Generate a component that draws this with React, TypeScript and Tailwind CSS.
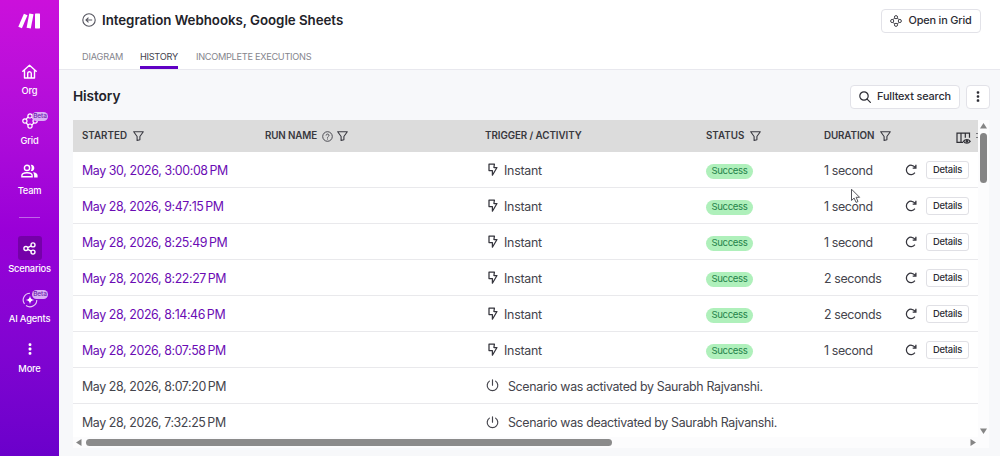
import React from "react";

type IconProps = { className?: string };

const Funnel = ({ className = "" }: IconProps) => (
  <svg className={`h-[11px] w-[11px] shrink-0 ${className}`} viewBox="0 0 11 11" fill="none" stroke="#3a3a42" strokeWidth="1.1" strokeLinejoin="round">
    <path d="M.7 .8h9.6L6.9 5.5v3.2L4.1 9.5V5.5L.7 .8Z" />
  </svg>
);

const GridIcon = ({ className = "" }: IconProps) => (
  <svg className={className} viewBox="0 0 16 16" fill="none" stroke="currentColor" strokeWidth="1.2">
    <circle cx="8" cy="2.9" r="2.1" />
    <circle cx="8" cy="13.1" r="2.1" />
    <circle cx="2.9" cy="8" r="2.1" />
    <circle cx="13.1" cy="8" r="2.1" />
    <path d="M6.2 4 4.1 6.2M9.8 4l2.1 2.2M6.2 12 4.1 9.8M9.8 12l2.1-2.2" />
  </svg>
);

const Dots = ({ className = "" }: IconProps) => (
  <svg className={className} viewBox="0 0 4 12" fill="currentColor">
    <rect x=".6" y=".2" width="2.8" height="2.8" rx="1" />
    <rect x=".6" y="4.6" width="2.8" height="2.8" rx="1" />
    <rect x=".6" y="9" width="2.8" height="2.8" rx="1" />
  </svg>
);

const Bolt = () => (
  <svg className="h-[13px] w-[11px] shrink-0" viewBox="0 0 11 13" fill="none" stroke="#34343c" strokeWidth="1.25" strokeLinejoin="round">
    <path d="M2 1.100h5.400L6.900 4.500h3.100L5.400 12.200V7.500H2V1.100Z" />
  </svg>
);

const Power = () => (
  <svg className="h-[13px] w-[13px] shrink-0" viewBox="0 0 13 13" fill="none" stroke="#44444c" strokeWidth="1.15" strokeLinecap="round">
    <path d="M6.5.8v5.4M3.4 2.1a5.3 5.3 0 1 0 6.2 0" />
  </svg>
);

const Refresh = () => (
  <svg className="h-[12px] w-[12px] shrink-0" viewBox="0 0 12 12" fill="none" stroke="#34343c" strokeWidth="1.25">
    <path d="M9.900 3.200A4.700 4.700 0 1 0 9.900 8.700" />
    <path d="M10.900.8v3.200H7.700" />
    <path d="M8.600 3.700 10.900 1.400v2.300Z" fill="#34343c" stroke="none" />
  </svg>
);

const Beta = () => (
  <span className="absolute top-0 left-[32px] flex h-[9px] w-[16px] items-center justify-center rounded-full bg-[#d9aff5] text-[6.500px] font-medium tracking-[-0.1px] text-[#6d1cae]">
    Beta
  </span>
);

function NavItem({ label, beta, children }: { label: string; beta?: boolean; children: React.ReactNode }) {
  return (
    <a className="relative flex h-[50px] w-full flex-col items-center">
      <span className="flex h-[18px] items-center justify-center">{children}</span>
      {beta && <Beta />}
      <span className="mt-[4px] text-[9.300px] leading-[14px] font-medium tracking-[-0.180px] whitespace-nowrap">{label}</span>
    </a>
  );
}

function Sidebar() {
  return (
    <nav className="flex h-full w-[59px] shrink-0 flex-col items-center bg-linear-to-b from-[#cb10db] via-[#9a00d8] to-[#6b00cb] text-white">
      <svg className="mt-[13px] h-[16px] w-[23px] shrink-0" viewBox="0 0 23 16" fill="#fff">
        <path d="M5.900.7 9.500 2.300 3.900 15.300.3 13.700Z" />
        <path d="M11.300.5l4.200.8L12.800 15.500l-4.200-.8Z" />
        <rect x="17" y=".6" width="5" height="14.800" rx=".6" />
      </svg>
      <div className="mt-[33px] w-full">
        <NavItem label="Org">
          <svg className="h-[15px] w-[15px]" viewBox="0 0 15 15" fill="none" stroke="currentColor" strokeWidth="1.400" strokeLinejoin="round" strokeLinecap="round">
            <path d="M.8 7.200 7.500 1.200l6.700 6M2.500 6v8h10V6M5.700 13.800V9.600a1.800 1.800 0 0 1 3.600 0v4.200" />
          </svg>
        </NavItem>
        <NavItem label="Grid" beta>
          <GridIcon className="h-[16px] w-[16px]" />
        </NavItem>
        <NavItem label="Team">
          <svg className="h-[14px] w-[17px]" viewBox="0 0 17 14">
            <circle cx="6" cy="3.900" r="2.600" fill="none" stroke="currentColor" strokeWidth="1.400" />
            <path d="M.9 12.700v-1.200c0-2 2.200-2.800 5.100-2.800s5.100.8 5.100 2.800v1.200Z" fill="none" stroke="currentColor" strokeWidth="1.400" />
            <path d="M9.700.8c2.200-.3 3.600 1.200 3.600 3.100S11.900 7.300 9.700 7c1.300-1.700 1.300-4.500 0-6.200ZM12 8.200c2.800.3 4.600 1.200 4.600 3.300v1.900h-3.500v-1.900c0-1.400-.3-2.300-1.100-3.300Z" fill="currentColor" />
          </svg>
        </NavItem>
      </div>
      <div className="mt-[5px] h-px w-[21px] shrink-0 bg-[#c065e8]" />
      <div className="mt-[18px] w-full">
        <a className="flex h-[54px] w-full flex-col items-center">
          <span className="flex h-[24px] w-[24px] items-center justify-center rounded-[3px] bg-[#7500a9]">
            <svg className="h-[13px] w-[13px]" viewBox="0 0 13 13" fill="none" stroke="currentColor" strokeWidth="1.350">
              <circle cx="2.900" cy="6.500" r="2" />
              <circle cx="10" cy="2.900" r="2" />
              <circle cx="10" cy="10.100" r="2" />
              <path d="m4.700 5.600 3.500-1.800M4.700 7.400l3.500 1.800" />
            </svg>
          </span>
          <span className="mt-[2px] text-[9.300px] leading-[14px] font-medium tracking-[-0.200px]">Scenarios</span>
        </a>
        <NavItem label="AI Agents" beta>
          <svg className="mt-px h-[16px] w-[16px]" viewBox="0 0 16 16" fill="none" stroke="currentColor" strokeWidth="1.100">
            <path d="M8 3.700c.4 2.700 1.500 3.900 4.200 4.300-2.700.4-3.800 1.600-4.200 4.300-.4-2.700-1.500-3.900-4.200-4.300C6.500 7.600 7.600 6.400 8 3.700Z" fill="currentColor" stroke="none" />
            <path d="M8 1.200a6.800 6.800 0 0 0-5.500 10.800M4 13.500A6.800 6.800 0 0 0 14.800 8" opacity=".8" />
          </svg>
        </NavItem>
        <NavItem label="More">
          <Dots className="h-[12px] w-[4px]" />
        </NavItem>
      </div>
    </nav>
  );
}

function Header() {
  return (
    <header className="flex h-[70px] shrink-0 flex-col border-b border-[#e8e8ee] bg-white pr-[19px] pl-[23px]">
      <div className="flex h-[41px] items-center">
        <svg className="-mt-px h-[14px] w-[14px] shrink-0" viewBox="0 0 14 14" fill="none" stroke="#55555f" strokeWidth="1.100">
          <circle cx="7" cy="7" r="6.200" />
          <path d="M10.200 7H4.200M6.500 4.600 4 7l2.500 2.400" />
        </svg>
        <h1 className="ml-[6px] text-[13.300px] font-semibold tracking-[-0.030px] text-[#222229]">Integration Webhooks, Google Sheets</h1>
        <button className="ml-auto flex h-[24px] w-[100px] items-center justify-center gap-[6px] rounded-[4px] border border-[#e2e2e8] bg-white text-[10.900px] font-medium tracking-[-0.170px] text-[#2c2c34]">
          <GridIcon className="h-[12px] w-[12px]" />
          Open in Grid
        </button>
      </div>
      <div className="flex h-[28px] text-[9.200px] tracking-[-0.280px] text-[#85858d]">
        <a className="flex h-[28px] w-[58px] items-center pt-[3px] whitespace-nowrap tracking-[-0.200px]">DIAGRAM</a>
        <a className="flex h-[28px] w-[38px] items-center border-b-[3px] border-[#6000c4] pt-[6px] whitespace-nowrap text-[#44444e]">HISTORY</a>
        <a className="ml-[18px] flex h-[28px] items-center pt-[3px] whitespace-nowrap">INCOMPLETE EXECUTIONS</a>
      </div>
    </header>
  );
}

type Run = { started: string; activity?: string; duration?: string };

const runs: Run[] = [
  { started: "May 30, 2026, 3:00:08\u202fPM", duration: "1 second" },
  { started: "May 28, 2026, 9:47:15\u202fPM", duration: "1 second" },
  { started: "May 28, 2026, 8:25:49\u202fPM", duration: "1 second" },
  { started: "May 28, 2026, 8:22:27\u202fPM", duration: "2 seconds" },
  { started: "May 28, 2026, 8:14:46\u202fPM", duration: "2 seconds" },
  { started: "May 28, 2026, 8:07:58\u202fPM", duration: "1 second" },
  { started: "May 28, 2026, 8:07:20\u202fPM", activity: "Scenario was activated by Saurabh Rajvanshi." },
  { started: "May 28, 2026, 7:32:25\u202fPM", activity: "Scenario was deactivated by Saurabh Rajvanshi." },
];

function Row({ run }: { run: Run }) {
  return (
    <div className="flex h-[36px] shrink-0 items-center border-b border-[#e9e9ec] pl-[9px] text-[12.400px] tracking-[-0.330px] whitespace-nowrap text-[#44444c] last:border-b-0">
      <div className={run.activity ? "w-[404px] pt-[3px] tracking-[-0.390px]" : "w-[404px] pt-[3px] tracking-[-0.390px] text-[#6b0cb4]"}>{run.started}</div>
      {run.activity ? (
        <div className="flex items-center gap-[9px] pt-px">
          <Power />
          <span className="pt-[2px]">{run.activity}</span>
        </div>
      ) : (
        <>
          <div className="flex w-[220px] items-center gap-[6px] pl-[1px] tracking-[-0.250px]">
            <Bolt />
            <span className="pt-[3px]">Instant</span>
          </div>
          <div className="w-[118px] pt-[3px]">
            <span className="flex h-[15px] w-[47px] items-center justify-center rounded-full bg-[#aff0bb] text-[9.600px] tracking-[-0.350px] text-[#25824a]">Success</span>
          </div>
          <div className="w-[81px] pt-[3px] tracking-[-0.370px]">{run.duration}</div>
          <Refresh />
          <button className="ml-[9px] flex h-[18px] w-[43px] items-center justify-center rounded-[3px] border border-[#e0e0e5] bg-white pt-px text-[9.400px] font-medium tracking-[-0.200px] text-[#2c2c34]">
            Details
          </button>
        </>
      )}
    </div>
  );
}

function HistoryTable() {
  return (
    <div className="flex h-[328px] w-[916px] flex-col bg-[#fcfcfd]">
      <div className="flex h-[317px]">
        <div className="flex w-[905px] flex-col overflow-hidden bg-white">
          <div className="flex h-[32px] shrink-0 items-center bg-[#dcdcdc] pl-[9px] text-[9.800px] font-semibold whitespace-nowrap text-[#38383e]">
            <div className="flex w-[183px] shrink-0 items-center gap-[6px]">
              STARTED <Funnel />
            </div>
            <div className="flex w-[220px] shrink-0 items-center tracking-[-0.130px]">
              RUN NAME
              <svg className="ml-[5px] h-[11px] w-[11px]" viewBox="0 0 11 11" fill="none" stroke="#44444c" strokeWidth=".95">
                <circle cx="5.500" cy="5.500" r="4.800" />
                <path d="M4.100 4.500c0-1.900 2.900-1.800 2.900-.1 0 1.100-1.500 1.100-1.500 2.300M5.500 7.500v1" />
              </svg>
              <Funnel className="ml-[4px]" />
            </div>
            <div className="w-[221px] shrink-0 tracking-[-0.060px]">TRIGGER / ACTIVITY</div>
            <div className="flex w-[118px] shrink-0 items-center gap-[6px]">
              STATUS <Funnel />
            </div>
            <div className="flex w-[132px] shrink-0 items-center gap-[6px] tracking-[-0.100px]">
              DURATION <Funnel />
            </div>
            <svg className="mt-[5px] h-[13px] w-[15px] shrink-0" viewBox="0 0 15 13" fill="none" stroke="#2e2e34" strokeWidth="1.200">
              <path d="M7 10.300H1V1.100h12.500v4.700M5 1.100v9.200M9.300 1.100v4.700" />
              <path d="M7.500 9.300c1.600-2.400 5.100-2.400 6.700 0-1.600 2.400-5.100 2.400-6.700 0Z" />
              <circle cx="10.900" cy="9.300" r=".8" fill="#2e2e34" />
            </svg>
            <div className="ml-[5px] flex shrink-0 flex-col gap-[3px] pb-[2px]">
              <i className="h-px w-[2px] bg-[#77777c]" />
              <i className="h-px w-[2px] bg-[#77777c]" />
            </div>
          </div>
          {runs.map((run) => (
            <Row key={run.started} run={run} />
          ))}
        </div>
        <div className="flex w-[11px] flex-col items-center">
          <svg className="mt-[3px] h-[6px] w-[7px]" viewBox="0 0 7 6" fill="#858585">
            <path d="M3.500 0 7 5.500H0Z" />
          </svg>
          <div className="mt-[4px] h-[50px] w-[7px] rounded-full bg-[#858585]" />
          <svg className="mt-auto mb-[3px] h-[6px] w-[7px]" viewBox="0 0 7 6" fill="#858585">
            <path d="M3.500 6 7 .5H0Z" />
          </svg>
        </div>
      </div>
      <div className="flex h-[11px] w-[905px] items-center pb-px pl-[3px]">
        <svg className="h-[7px] w-[6px]" viewBox="0 0 6 7" fill="#858585">
          <path d="M0 3.500 5.500 0v7Z" />
        </svg>
        <div className="ml-[4px] h-[7px] w-[526px] rounded-full bg-[#8b8b8b]" />
        <svg className="mr-[2px] ml-auto h-[7px] w-[6px]" viewBox="0 0 6 7" fill="#858585">
          <path d="M6 3.500.5 0v7Z" />
        </svg>
      </div>
    </div>
  );
}

export default function App() {
  return (
    <div className="relative flex h-[456px] w-[1000px] overflow-hidden bg-[#f7f8fa] font-[Inter,sans-serif]">
      <Sidebar />
      <div className="flex min-w-0 flex-1 flex-col">
        <Header />
        <main className="flex flex-1 flex-col pr-[10px] pl-[14px]">
          <div className="flex h-[50px] shrink-0 items-center pt-[3px]">
            <h2 className="text-[13.700px] font-semibold tracking-[-0.100px] text-[#222229]">History</h2>
            <button className="ml-auto flex h-[24px] w-[110px] items-center justify-center gap-[6px] rounded-[4px] border border-[#e2e2e8] bg-white text-[10.900px] font-medium tracking-[-0.160px] whitespace-nowrap text-[#2c2c34]">
              <svg className="h-[12px] w-[12px] shrink-0" viewBox="0 0 12 12" fill="none" stroke="currentColor" strokeWidth="1.200" strokeLinecap="round">
                <circle cx="5" cy="5" r="4.200" />
                <path d="m8.100 8.100 3.300 3.300" />
              </svg>
              Fulltext search
            </button>
            <button className="ml-[6px] flex h-[24px] w-[24px] items-center justify-center rounded-[4px] border border-[#e2e2e8] bg-white text-[#2c2c34]">
              <Dots className="h-[11px] w-[4px]" />
            </button>
          </div>
          <HistoryTable />
        </main>
      </div>
      <svg className="absolute top-[188px] left-[850px] h-[16px] w-[11px]" viewBox="0 0 11 16" fill="#fff" stroke="#55555c" strokeWidth="1">
        <path d="M1.500 1.200v11.300l2.600-2.400 2 4.300 1.900-.9-1.900-4.200h3.500Z" />
      </svg>
    </div>
  );
}
